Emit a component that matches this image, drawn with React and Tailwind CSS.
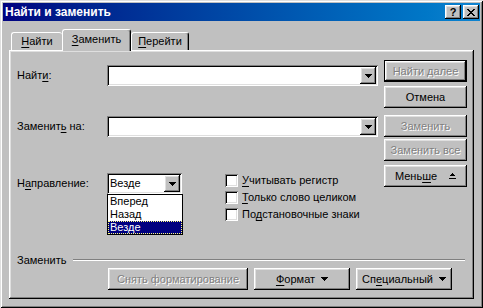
import React from 'react';

const raised = 'shadow-[inset_-1px_-1px_#000000,inset_1px_1px_#ffffff,inset_-2px_-2px_#808080,inset_2px_2px_#dfdfdf]';
const sunken = 'shadow-[inset_1px_1px_#808080,inset_-1px_-1px_#ffffff,inset_2px_2px_#000000,inset_-2px_-2px_#dfdfdf]';
const grayText = 'text-[#808080] [text-shadow:1px_1px_0_#ffffff]';

function U({ children }) {
    return <span className="underline decoration-1 underline-offset-[2px]">{children}</span>;
}

function DownTri() {
    return (
        <svg width="7" height="4" viewBox="0 0 7 4" shapeRendering="crispEdges">
            <path d="M0 0h7L3.5 4z" fill="#000" />
        </svg>
    );
}

function LessIcon() {
    return (
        <svg width="7" height="7" viewBox="0 0 7 7" shapeRendering="crispEdges">
            <path d="M3 0h1v1h1v1h1v1H1V2h1V1h1z" fill="#000" />
            <path d="M0 5h7v1H0z" fill="#000" />
        </svg>
    );
}

function ArrowBtn() {
    return (
        <div className={`flex h-[17px] w-[16px] items-center justify-center bg-[#c0c0c0] ${raised}`}>
            <DownTri />
        </div>
    );
}

function ComboInput() {
    return (
        <div className={`flex h-[21px] w-[271px] items-center justify-end bg-white pr-[2px] ${sunken}`}>
            <ArrowBtn />
        </div>
    );
}

function Btn({ children, className = '', disabled, isDefault }) {
    return (
        <div
            className={`flex h-[22px] items-center justify-center bg-[#c0c0c0] ${
                isDefault ? 'border border-black' : ''
            } ${raised} ${disabled ? grayText : 'text-black'} ${className}`}
        >
            {children}
        </div>
    );
}

function Check({ children }) {
    return (
        <div className="flex h-[13px] items-center gap-[4px]">
            <span className={`h-[13px] w-[13px] shrink-0 bg-white ${sunken}`} />
            <span className="leading-[13px]">{children}</span>
        </div>
    );
}

export default function App() {
    return (
        <div className="h-[308px] w-[483px] bg-[#c0c0c0] p-[3px] font-['Liberation_Sans',Arial,sans-serif] text-[11px] text-black shadow-[inset_1px_1px_#dfdfdf,inset_-1px_-1px_#000000,inset_2px_2px_#ffffff,inset_-2px_-2px_#808080]">
            {/* title bar */}
            <div className="flex h-[18px] items-center justify-between bg-linear-to-r from-[#000080] to-[#1084d0] pl-[2px] pr-[1px]">
                <span className="text-[12px] font-bold leading-none text-white">Найти и заменить</span>
                <div className="flex gap-[2px]">
                    <div className={`flex h-[14px] w-[16px] items-center justify-center bg-[#c0c0c0] text-[11px] font-bold leading-none ${raised}`}>
                        ?
                    </div>
                    <div className={`flex h-[14px] w-[16px] items-center justify-center bg-[#c0c0c0] ${raised}`}>
                        <svg width="8" height="7" viewBox="0 0 8 7" shapeRendering="crispEdges">
                            <path d="M0 0h2v1h1v1h2V1h1V0h2v1H7v1H6v1H5v1h1v1h1v1h1v1H6V6H5V5H3v1H2v1H0V6h1V5h1V4h1V3H2V2H1V1H0z" fill="#000" />
                        </svg>
                    </div>
                </div>
            </div>

            <div className="px-[6px] pt-[8px]">
                {/* tabs */}
                <div className="flex h-[21px] items-end pl-[2px]">
                    <div className="flex h-[18px] w-[51px] items-center justify-center rounded-t-[3px] border-l border-t border-white">
                        <span><U>Н</U>айти</span>
                    </div>
                    <div className="relative z-10 -mb-px flex h-[22px] w-[69px] items-center justify-center rounded-t-[3px] border-l border-r border-t border-white border-r-black bg-[#c0c0c0] pb-[2px] shadow-[inset_-1px_0_#808080]">
                        <span><U>З</U>аменить</span>
                    </div>
                    <div className="flex h-[18px] w-[58px] items-center justify-center rounded-t-[3px] border-l border-r border-t border-white border-r-black shadow-[inset_-1px_0_#808080]">
                        <span><U>П</U>ерейти</span>
                    </div>
                </div>

                {/* panel */}
                <div className={`h-[249px] w-[465px] pl-[8px] pt-[10px] ${raised}`}>
                    <div className="flex h-[194px]">
                        <div className="w-[361px]">
                            <div className="mt-[5px] flex h-[21px] items-center">
                                <span className="w-[90px]">Найт<U>и</U>:</span>
                                <ComboInput />
                            </div>
                            <div className="mt-[30px] flex h-[21px] items-center">
                                <span className="w-[90px]">Заменит<U>ь</U> на:</span>
                                <ComboInput />
                            </div>
                            <div className="mt-[36px] flex items-start">
                                <span className="flex h-[21px] w-[90px] items-center">Н<U>а</U>правление:</span>
                                <div className="relative w-[75px]">
                                    <div className={`flex h-[21px] items-center justify-between bg-white pl-[3px] pr-[2px] ${sunken}`}>
                                        <span>Везде</span>
                                        <ArrowBtn />
                                    </div>
                                    <div className="absolute left-0 top-full z-20 w-[76px] border border-black bg-white">
                                        <div className="h-[13px] pl-[2px] leading-[13px]">Вперед</div>
                                        <div className="h-[13px] pl-[2px] leading-[13px]">Назад</div>
                                        <div className="h-[13px] border border-dotted border-[#ffff80] bg-[#000080] pl-[1px] leading-[11px] text-white">Везде</div>
                                    </div>
                                </div>
                                <div className="ml-[43px] mt-[1px] flex flex-col gap-[4px]">
                                    <Check><U>У</U>читывать регистр</Check>
                                    <Check><U>Т</U>олько слово целиком</Check>
                                    <Check>По<U>д</U>становочные знаки</Check>
                                </div>
                            </div>
                        </div>

                        <div className="ml-[6px] flex w-[83px] flex-col">
                            <Btn disabled isDefault>Найти далее</Btn>
                            <Btn className="mt-[4px]">Отмена</Btn>
                            <Btn disabled className="mt-[7px]">Заменить</Btn>
                            <Btn disabled className="mt-[2px]">Заменить все</Btn>
                            <Btn className="mt-[4px]">
                                <span>Мень<U>ш</U>е</span>
                                <span className="ml-[12px] flex"><LessIcon /></span>
                            </Btn>
                        </div>
                    </div>

                    <div className="flex h-[12px] items-center">
                        <span>Заменить</span>
                        <div className="ml-[7px] mr-[9px] h-[2px] flex-1 border-b border-t border-b-white border-t-[#808080]" />
                    </div>

                    <div className="ml-[91px] mt-[2px] flex">
                        <Btn disabled className="w-[140px]">Снять форматирование</Btn>
                        <Btn className="ml-[6px] w-[96px]">
                            <span><U>Ф</U>ормат</span>
                            <span className="ml-[6px] flex"><DownTri /></span>
                        </Btn>
                        <Btn className="ml-[6px] w-[96px]">
                            <span>Сп<U>е</U>циальный</span>
                            <span className="ml-[6px] flex"><DownTri /></span>
                        </Btn>
                    </div>
                </div>
            </div>
        </div>
    );
}
